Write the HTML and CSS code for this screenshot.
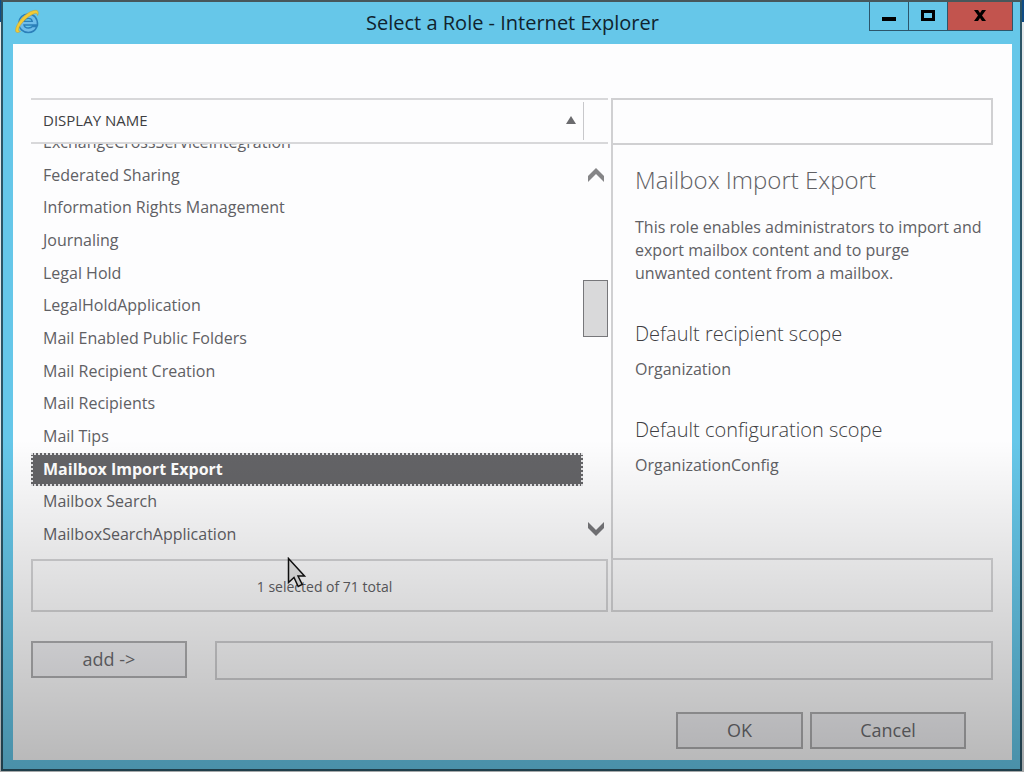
FILE: index.html
```html
<!DOCTYPE html>
<html lang="en">
<head>
<meta charset="utf-8">
<title>Select a Role - Internet Explorer</title>
<link rel="stylesheet" href="styles.css">
</head>
<body>
<div class="window">
  <header class="titlebar">
    <svg class="logo" viewBox="0 0 26 26" aria-hidden="true">
      <path d="M23.500 16H10c.3 2.200 2.200 3 4.600 3 1.700 0 3-.5 3.800-1.400h4.500c-1.500 3.700-4.600 5.800-8.600 5.800-5.500 0-9.500-3.700-9.500-9.200 0-5.400 4.100-9.300 9.600-9.300 5.600 0 9.500 4.300 9.100 11.100z" fill="#6fbdea" stroke="#2b7fb9" stroke-width="1.500"/>
      <path d="M10 12.300c.5-1.900 2-2.900 4.200-2.900s3.700 1 4.100 2.900z" fill="#66c7e9" stroke="#2b7fb9" stroke-width="1.300"/>
      <path d="M6.500 22.400c-2.800 1.800-5 1.500-4.900-1.300C1.800 14.600 11.500 3.300 19.700 1.500c4.200-.9 5.500 1.300 3.900 5-.1-2.200-1.200-2.700-3.600-1.700C13.300 7.200 5.200 15.800 4.600 20.400c-.2 1.500.4 2 1.900 2z" fill="#f3cb35" stroke="#bda23e" stroke-width=".6"/>
    </svg>
    <h1 class="title">Select a Role - Internet Explorer</h1>
    <div class="controls">
      <button class="control" aria-label="Minimize"><svg width="16" height="16" viewBox="0 0 16 16"><path d="M1 9h14v4H1z"/></svg></button>
      <button class="control" aria-label="Maximize"><svg width="16" height="16" viewBox="0 0 16 16"><path d="M2.500 3.500h11v8h-11z" fill="none" stroke="#000" stroke-width="3"/></svg></button>
      <button class="control control-close" aria-label="Close"><svg width="16" height="16" viewBox="0 0 16 16"><path d="M2 2h4l2 3 2-3h4l-4 5.500 4 5.500h-4l-2-3-2 3H2l4-5.500z"/></svg></button>
    </div>
  </header>

  <main class="content">
    <div class="panes">
      <section class="pane">
        <div class="list-head">
          <button class="sort">DISPLAY NAME <svg width="10" height="8" viewBox="0 0 10 8" aria-hidden="true"><path d="M5 0l5 8H0z" fill="#6b6b6e"/></svg></button>
        </div>
        <div class="list-body">
          <ul class="roles" role="listbox" aria-label="Roles">
            <li class="role" role="option">ExchangeCrossServiceIntegration</li>
            <li class="role" role="option">Federated Sharing</li>
            <li class="role" role="option">Information Rights Management</li>
            <li class="role" role="option">Journaling</li>
            <li class="role" role="option">Legal Hold</li>
            <li class="role" role="option">LegalHoldApplication</li>
            <li class="role" role="option">Mail Enabled Public Folders</li>
            <li class="role" role="option">Mail Recipient Creation</li>
            <li class="role" role="option">Mail Recipients</li>
            <li class="role" role="option">Mail Tips</li>
            <li class="role role-selected" role="option" aria-selected="true">Mailbox Import Export</li>
            <li class="role" role="option">Mailbox Search</li>
            <li class="role" role="option">MailboxSearchApplication</li>
          </ul>
          <div class="scrollbar">
            <button class="arrow" aria-label="Scroll up"><svg width="18" height="14" viewBox="0 0 18 14"><path d="M1 8l8-8 8 8v6L9 6l-8 8z" fill="#858587"/></svg></button>
            <div class="track"><div class="thumb"></div></div>
            <button class="arrow" aria-label="Scroll down"><svg width="18" height="14" viewBox="0 0 18 14"><path d="M1 6l8 8 8-8V0L9 8 1 0z" fill="#77777a"/></svg></button>
          </div>
        </div>
        <div class="status">1 selected of 71 total
          <svg class="pointer" width="20" height="32" viewBox="0 0 20 32" aria-hidden="true"><path d="M1.500 1.500v24l5.500-5 4.200 9 4-2-4.200-8.500h6.500z" fill="#e6e6e6" stroke="#111" stroke-width="1.500"/></svg>
        </div>
      </section>

      <section class="pane">
        <div class="detail-head"></div>
        <div class="detail-body">
          <h2 class="detail-title">Mailbox Import Export</h2>
          <p class="text">This role enables administrators to import and export mailbox content and to purge unwanted content from a mailbox.</p>
          <h3 class="scope">Default recipient scope</h3>
          <p class="text">Organization</p>
          <h3 class="scope">Default configuration scope</h3>
          <p class="text">OrganizationConfig</p>
        </div>
        <div class="detail-foot"></div>
      </section>
    </div>

    <div class="picker">
      <button class="button">add -&gt;</button>
      <input class="picked" type="text" aria-label="Selected roles">
    </div>

    <div class="actions">
      <button class="button button-ok">OK</button>
      <button class="button">Cancel</button>
    </div>
  </main>
</div>
</body>
</html>
```
FILE: styles.css
```css
* {
  box-sizing: border-box;
}

body {
  position: relative;
  display: flex;
  min-height: 100vh;
  margin: 0;
  padding: 0 2px 1px 1px;
  background: linear-gradient(#0f4c86 22px, #e4e8ea 22px);
  color: #606064;
  font: 16px/23px "Open Sans", "Noto Sans", sans-serif;
}

/* Shade that darkens the lower part of the screen */
body::after {
  content: "";
  position: absolute;
  inset: 0;
  background: linear-gradient(rgba(0, 0, 0, 0) 57%, rgba(0, 0, 0, 0.28));
  pointer-events: none;
}

button,
input {
  margin: 0;
  color: inherit;
  font: inherit;
}

h1,
h2,
h3,
p,
ul {
  margin: 0;
  padding: 0;
  font-weight: 400;
}

.window {
  flex: 1;
  display: flex;
  flex-direction: column;
  padding: 0 8px 9px 10px;
  border: 2px solid #2c5566;
  border-top-color: #47575b;
  background: #66c7e9;
}

.titlebar {
  position: relative;
  display: flex;
  justify-content: center;
  height: 42px;
}

.logo {
  position: absolute;
  left: 1px;
  top: 7px;
  width: 26px;
  height: 26px;
}

.title {
  color: #10232e;
  font-size: 20px;
  line-height: 41px;
}

.controls {
  position: absolute;
  right: -1px;
  top: 0;
  display: flex;
}

.control {
  display: grid;
  place-items: center;
  width: 40px;
  height: 29px;
  margin-left: -1px;
  padding: 0;
  border: 1px solid #2c566b;
  border-top: 0;
  background: #66c7e9;
}

.control-close {
  width: 66px;
  background: #c2544e;
}

.content {
  flex: 1;
  display: flex;
  flex-direction: column;
  padding: 54px 19px 11px 18px;
  background: #fdfdfe;
}

.panes {
  flex: 1;
  display: grid;
  grid-template-columns: 577fr 382fr;
  gap: 3px;
}

.pane {
  display: flex;
  flex-direction: column;
  min-width: 0;
}

.list-head {
  height: 46px;
  padding: 2px 24px 2px 0;
  border: solid #d8d8da;
  border-width: 2px 0;
}

.sort {
  display: flex;
  align-items: center;
  justify-content: space-between;
  width: 100%;
  height: 100%;
  padding: 0 7px 2px 12px;
  border: 0;
  border-right: 1px solid #c8c8cb;
  background: none;
  color: #3e3e42;
  font-size: 15px;
}

.list-body {
  flex: 1;
  display: flex;
  overflow: hidden;
}

.roles {
  flex: 1;
  display: grid;
  grid-auto-rows: 1fr;
  margin: -18px 0 8px;
  list-style: none;
}

.role {
  display: flex;
  align-items: center;
  padding-left: 12px;
}

.role-selected {
  padding-left: 10px;
  border: 2px dotted #e4e4e6;
  background: #646467;
  color: #fff;
  font-weight: 700;
}

.scrollbar {
  display: flex;
  flex-direction: column;
  width: 25px;
  padding: 19px 0 18px;
}

.arrow {
  display: grid;
  place-items: center;
  height: 24px;
  padding: 0;
  border: 0;
  background: none;
}

.track {
  flex: 1;
  padding-top: 93px;
}

.thumb {
  height: 57px;
  border: 1px solid #77777a;
  background: #d9d9da;
}

.status {
  position: relative;
  height: 53px;
  padding-left: 10px;
  border: 2px solid #d4d4d6;
  font-size: 14px;
  line-height: 51px;
  text-align: center;
}

.pointer {
  position: absolute;
  left: 254px;
  top: -4px;
}

.detail-head {
  height: 47px;
  border: 2px solid #d0d0d2;
}

.detail-body {
  flex: 1;
  padding: 20px 8px 0 22px;
  border-left: 2px solid #d0d0d2;
}

.detail-title {
  margin-bottom: 21px;
  font-size: 24px;
  font-weight: 300;
  line-height: 30px;
}

.scope {
  margin: 35px 0 11px;
  color: #3e3e42;
  font-size: 20px;
  font-weight: 300;
  line-height: 27px;
}

.detail-foot {
  height: 54px;
  border: 2px solid #d4d4d6;
}

.picker {
  display: flex;
  align-items: flex-start;
  gap: 28px;
  margin-top: 29px;
}

.picked {
  flex: 1;
  min-width: 0;
  height: 39px;
  border: 2px solid #d0d0d2;
  background: none;
}

.button {
  width: 156px;
  height: 37px;
  padding: 0;
  border: 2px solid #b0b0b2;
  background: #f3f3f6;
  color: #6c6c70;
  font-size: 18px;
}

.button-ok {
  width: 127px;
}

.actions {
  display: flex;
  justify-content: flex-end;
  gap: 7px;
  margin-top: 32px;
  padding-right: 27px;
}
```
